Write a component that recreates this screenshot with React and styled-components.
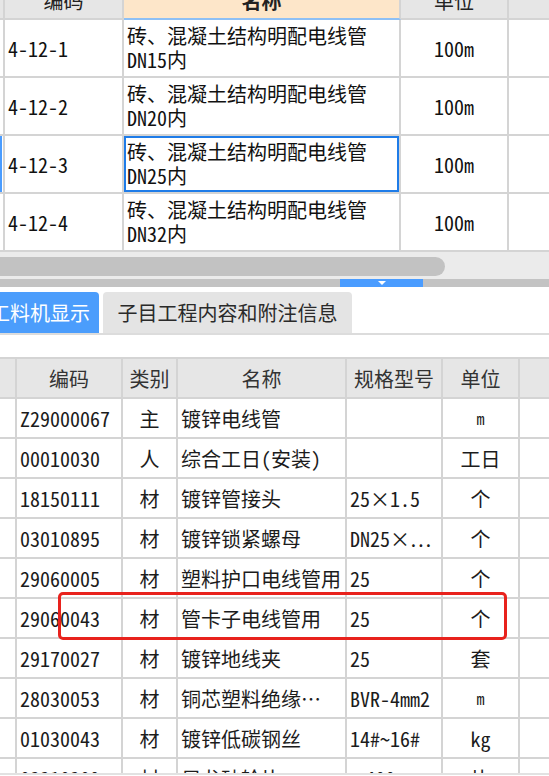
import React from "react";
import styled, { createGlobalStyle } from "styled-components";

const GlobalStyle = createGlobalStyle`
  html, body {
    margin: 0;
    padding: 0;
    background: #ffffff;
  }
  body {
    font-family: "Noto Sans CJK SC", "Noto Sans", sans-serif;
    font-feature-settings: "hwid";
    color: #111111;
  }
`;

const LINE = "#d4d4d4";

const topRows = [
  { code: "4-12-1", name: "砖、混凝土结构明配电线管", size: "DN15内", unit: "100m" },
  { code: "4-12-2", name: "砖、混凝土结构明配电线管", size: "DN20内", unit: "100m" },
  { code: "4-12-3", name: "砖、混凝土结构明配电线管", size: "DN25内", unit: "100m", active: true },
  { code: "4-12-4", name: "砖、混凝土结构明配电线管", size: "DN32内", unit: "100m" },
];

const materials = [
  { code: "Z29000067", kind: "主", name: "镀锌电线管", spec: "", unit: "m", small: true },
  { code: "00010030", kind: "人", name: "综合工日(安装)", spec: "", unit: "工日" },
  { code: "18150111", kind: "材", name: "镀锌管接头", spec: "25×1.5", unit: "个" },
  { code: "03010895", kind: "材", name: "镀锌锁紧螺母", spec: "DN25×⋯", unit: "个" },
  { code: "29060005", kind: "材", name: "塑料护口电线管用", spec: "25", unit: "个" },
  { code: "29060043", kind: "材", name: "管卡子电线管用", spec: "25", unit: "个" },
  { code: "29170027", kind: "材", name: "镀锌地线夹", spec: "25", unit: "套" },
  { code: "28030053", kind: "材", name: "铜芯塑料绝缘⋯", spec: "BVR-4mm2", unit: "m", small: true },
  { code: "01030043", kind: "材", name: "镀锌低碳钢丝", spec: "14#～16#", unit: "kg" },
  { code: "03210209", kind: "材", name: "尼龙砂轮片", spec: "φ400", unit: "片" },
];

export default function App() {
  return (
    <>
      <GlobalStyle />
      <Page>
        <TopTable>
          <HeadCell />
          <HeadCell><HeadText>编码</HeadText></HeadCell>
          <HeadCell $focus><HeadText $bold>名称</HeadText></HeadCell>
          <HeadCell><HeadText>单位</HeadText></HeadCell>
          <HeadCell />
          {topRows.map((row) => (
            <React.Fragment key={row.code}>
              <RowMark $active={row.active} />
              <TopCell>{row.code}</TopCell>
              <TopCell $selected={row.active}>
                <NameLines>
                  <span>{row.name}</span>
                  <span>{row.size}</span>
                </NameLines>
              </TopCell>
              <TopCell $center>{row.unit}</TopCell>
              <TopCell />
            </React.Fragment>
          ))}
        </TopTable>

        <ScrollTrack>
          <ScrollThumb />
        </ScrollTrack>

        <Splitter>
          <SplitHandle>
            <Arrow />
          </SplitHandle>
        </Splitter>

        <TabBar>
          <Tab $active>工料机显示</Tab>
          <Tab>子目工程内容和附注信息</Tab>
        </TabBar>

        <LowerTable>
          <LowerHead />
          <LowerHead>编码</LowerHead>
          <LowerHead>类别</LowerHead>
          <LowerHead>名称</LowerHead>
          <LowerHead>规格型号</LowerHead>
          <LowerHead>单位</LowerHead>
          <LowerHead />
          {materials.map((m) => (
            <React.Fragment key={m.code}>
              <Cell />
              <Cell>{m.code}</Cell>
              <Cell $center>{m.kind}</Cell>
              <Cell>{m.name}</Cell>
              <Cell>{m.spec}</Cell>
              <Cell $center $small={m.small}>{m.unit}</Cell>
              <Cell />
            </React.Fragment>
          ))}
          <Highlight />
        </LowerTable>
      </Page>
    </>
  );
}

const Page = styled.div`
  width: 549px;
  height: 773px;
  overflow: hidden;
  border-bottom: 2px solid #e2e2e2;
`;

const TopTable = styled.div`
  display: grid;
  grid-template-columns: 5px 119px 277px 108px 1fr;
  grid-template-rows: 20px repeat(4, 58px);
  width: 560px;
`;

const HeadCell = styled.div`
  box-sizing: border-box;
  height: 20px;
  overflow: hidden;
  display: flex;
  align-items: flex-end;
  justify-content: center;
  padding-bottom: 7px;
  background: ${(p) => (p.$focus ? "#fde6c9" : "#e6e6e6")};
  border-right: 2px solid ${LINE};
  border-bottom: 2px solid ${(p) => (p.$focus ? "#8ec0f5" : LINE)};
`;

const HeadText = styled.span`
  font-size: 20px;
  line-height: 20px;
  white-space: nowrap;
  font-weight: ${(p) => (p.$bold ? 700 : 400)};
  color: #222;
`;

const RowMark = styled.div`
  box-sizing: border-box;
  background: #ffffff;
  border-right: 2px solid ${LINE};
  border-bottom: 2px solid ${LINE};
  box-shadow: ${(p) => (p.$active ? "inset 2px 0 0 #4a9cff" : "none")};
`;

const TopCell = styled.div`
  box-sizing: border-box;
  display: flex;
  align-items: center;
  justify-content: ${(p) => (p.$center ? "center" : "flex-start")};
  padding-left: ${(p) => (p.$center ? "0" : "3px")};
  font-size: 20px;
  white-space: nowrap;
  overflow: hidden;
  background: #ffffff;
  border-right: 2px solid ${LINE};
  border-bottom: 2px solid ${LINE};
  box-shadow: ${(p) => (p.$selected ? "inset 0 0 0 2px #1f7ce8" : "none")};
`;

const NameLines = styled.div`
  display: flex;
  flex-direction: column;
  line-height: 24px;
`;

const ScrollTrack = styled.div`
  height: 27px;
  background: #ebebeb;
  display: flex;
  align-items: flex-start;
`;

const ScrollThumb = styled.div`
  margin-top: 5px;
  width: 445px;
  height: 19px;
  background: #c2c2c2;
  border-radius: 0 10px 10px 0;
`;

const Splitter = styled.div`
  height: 8px;
  background: #c3c3c3;
  display: flex;
  padding-left: 340px;
`;

const SplitHandle = styled.div`
  width: 83px;
  background: #4a9cff;
  display: flex;
  justify-content: center;
  padding-top: 2px;
  box-sizing: border-box;
`;

const Arrow = styled.div`
  width: 0;
  height: 0;
  border-left: 4px solid transparent;
  border-right: 4px solid transparent;
  border-top: 4px solid #ffffff;
`;

const TabBar = styled.div`
  margin-top: 5px;
  height: 43px;
  box-sizing: border-box;
  display: flex;
  gap: 4px;
  border-bottom: 2px solid #dcdcdc;
`;

const Tab = styled.div`
  box-sizing: border-box;
  width: ${(p) => (p.$active ? "99px" : "249px")};
  display: flex;
  align-items: center;
  justify-content: ${(p) => (p.$active ? "flex-end" : "center")};
  padding-right: ${(p) => (p.$active ? "9px" : "0")};
  overflow: hidden;
  white-space: nowrap;
  font-size: 20px;
  background: ${(p) => (p.$active ? "#4b9dfc" : "#e4e4e4")};
  color: ${(p) => (p.$active ? "#ffffff" : "#2a2a2a")};
  border-radius: ${(p) => (p.$active ? "0 4px 0 0" : "4px 4px 0 0")};
`;

const LowerTable = styled.div`
  position: relative;
  margin-top: 22px;
  display: grid;
  grid-template-columns: 17px 106px 55px 169px 96px 77px 1fr;
  grid-template-rows: 40px;
  grid-auto-rows: 40px;
  border-top: 2px solid ${LINE};
  width: 570px;
`;

const LowerHead = styled.div`
  box-sizing: border-box;
  display: flex;
  align-items: center;
  justify-content: center;
  font-size: 20px;
  color: #333;
  background: #e6e6e6;
  border-right: 2px solid ${LINE};
  border-bottom: 2px solid ${LINE};
`;

const Cell = styled.div`
  box-sizing: border-box;
  display: flex;
  align-items: center;
  justify-content: ${(p) => (p.$center ? "center" : "flex-start")};
  padding-left: ${(p) => (p.$center ? "0" : "3px")};
  font-size: ${(p) => (p.$small ? "16px" : "20px")};
  color: #1c1c1c;
  white-space: nowrap;
  overflow: hidden;
  background: #ffffff;
  border-right: 2px solid ${LINE};
  border-bottom: 2px solid ${LINE};
`;

const Highlight = styled.div`
  position: absolute;
  left: 58px;
  top: 233px;
  width: 449px;
  height: 48px;
  box-sizing: border-box;
  border: 3px solid #e8221d;
  border-radius: 5px;
  pointer-events: none;
`;
